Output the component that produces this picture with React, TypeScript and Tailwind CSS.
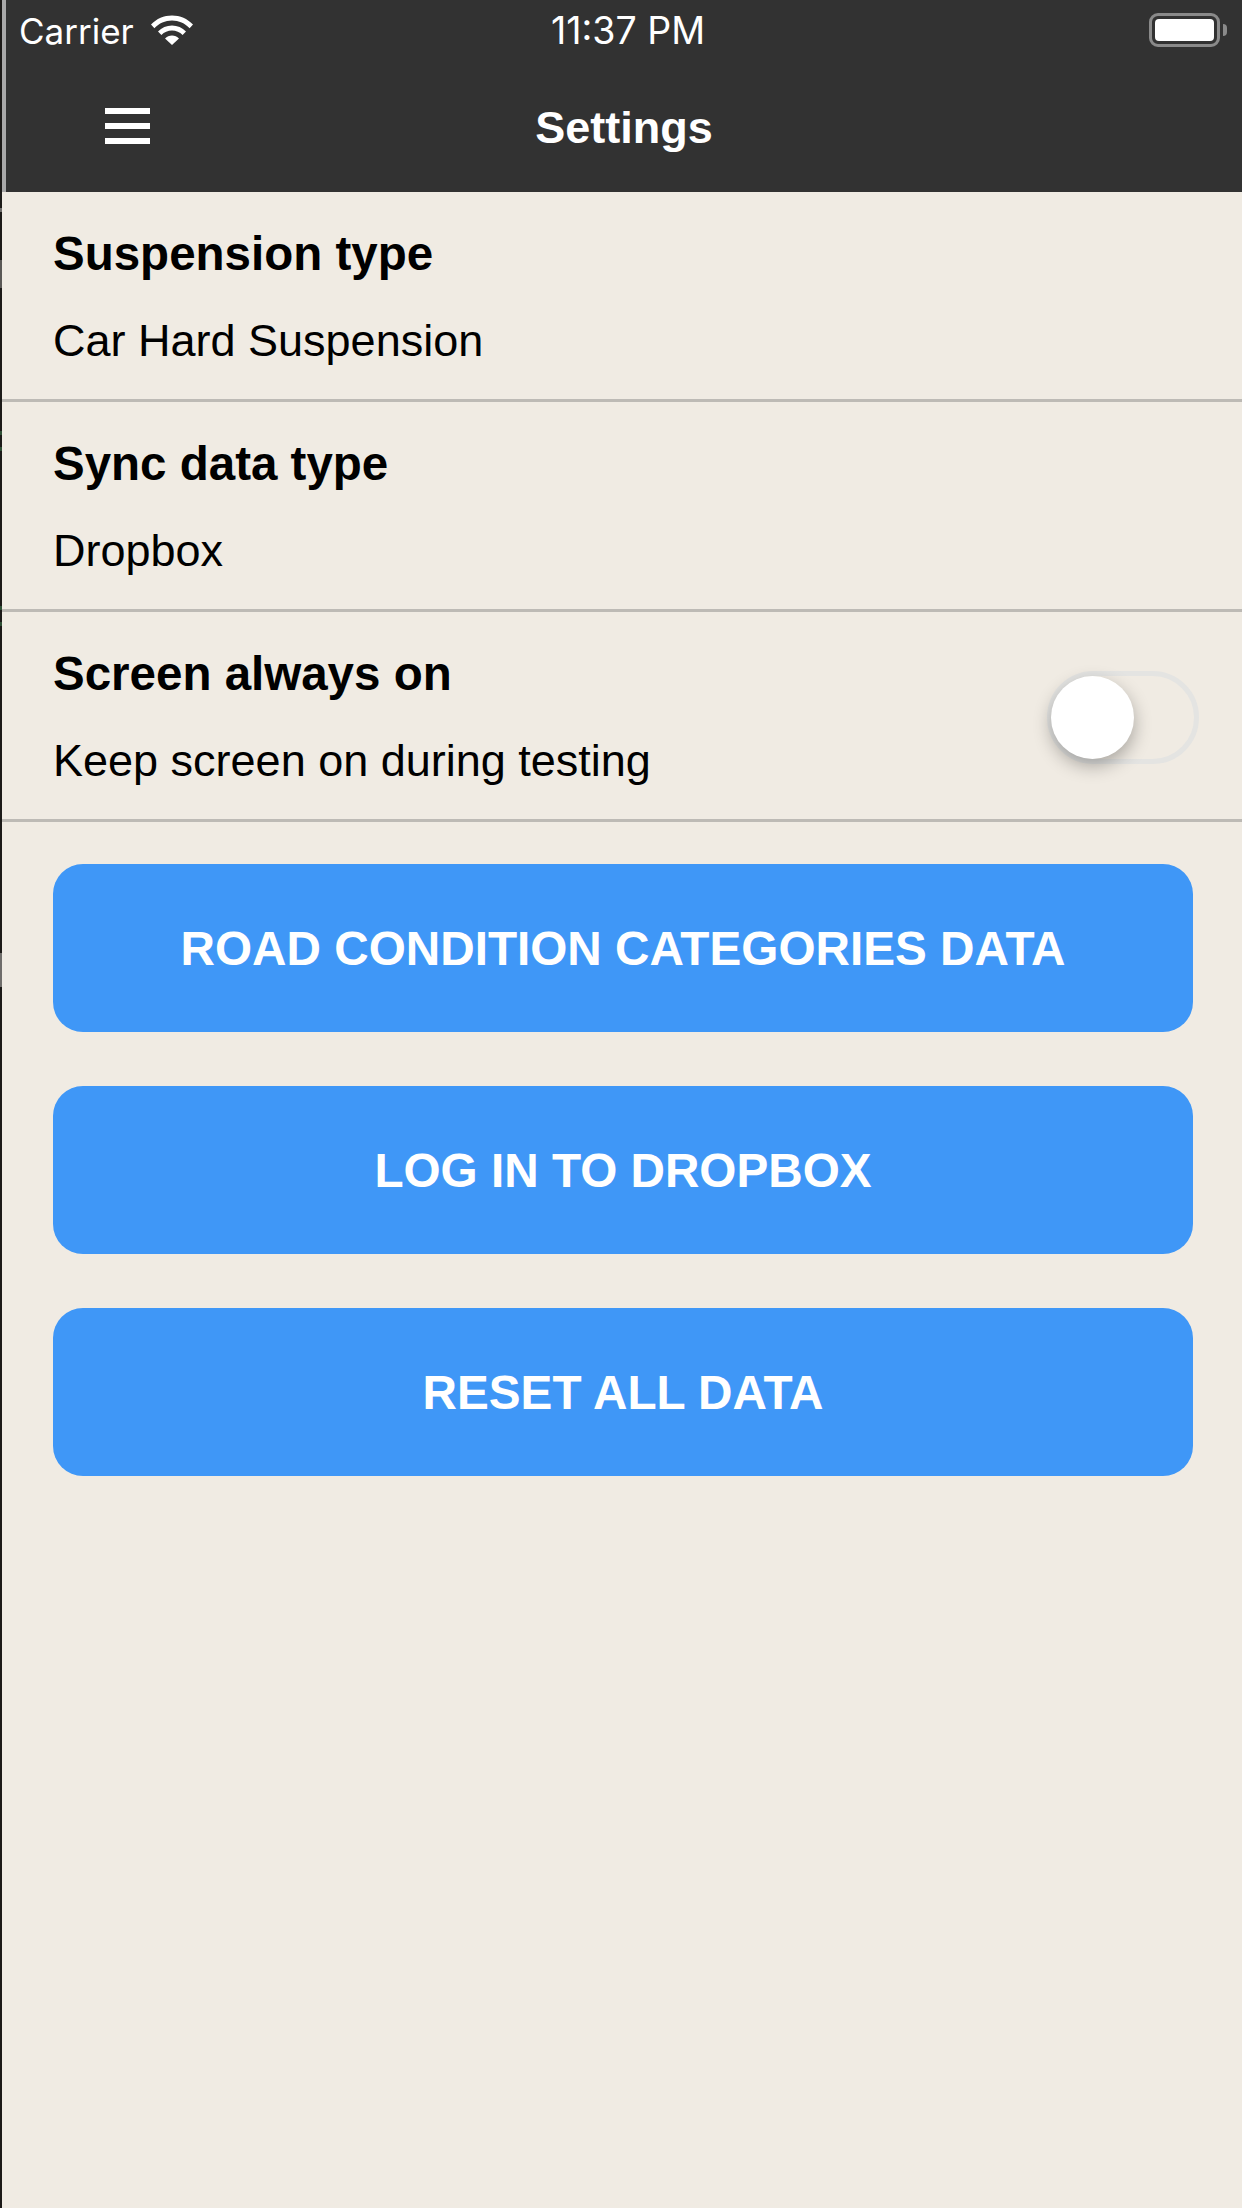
const rows = [
  { title: "Suspension type", value: "Car Hard Suspension" },
  { title: "Sync data type", value: "Dropbox" },
  { title: "Screen always on", value: "Keep screen on during testing", toggle: true },
]

const buttons = ["ROAD CONDITION CATEGORIES DATA", "LOG IN TO DROPBOX", "RESET ALL DATA"]

function Wifi() {
  return (
    <svg width="42" height="30" viewBox="0 0 42 30" fill="#fff">
      <path d="M0 9.600C5.600 3.800 12.900.6 21 .6s15.400 3.200 21 9L38.600 13.200C33.900 8.400 27.800 5.600 21 5.600S8.100 8.400 3.400 13.200Z" />
      <path d="M7 16.500C10.700 12.800 15.600 10.500 21 10.500s10.300 2.300 14 6L31.600 20C28.800 17.300 25.100 15.600 21 15.600S13.200 17.300 10.400 20Z" />
      <path d="M14 23.500C15.900 21.700 18.300 20.600 21 20.600s5.100 1.100 7 2.900L21 30Z" />
    </svg>
  )
}

function Battery() {
  return (
    <div className="flex items-center gap-[3px]">
      <div className="w-[71px] h-[34px] rounded-[9px] border-[3px] border-[#8a8a8a] p-[3px]">
        <div className="w-full h-full rounded-[4px] bg-white"></div>
      </div>
      <div className="w-[4px] h-[12px] rounded-r-full bg-[#8a8a8a]"></div>
    </div>
  )
}

export default function App() {
  return (
    <div className="relative w-[1242px] h-[2208px] bg-[#f0ebe3] border-l-2 border-[#1c1a18]" style={{ fontFamily: "'Liberation Sans', Arial, sans-serif" }}>
      {/* Marks left on the window edge */}
      <div className="absolute left-[-2px] top-[208px] w-[2px] h-[4px] bg-[#6f6d6b]"></div>
      <div className="absolute left-[-2px] top-[260px] w-[2px] h-[28px] bg-[#5a5856]"></div>
      <div className="absolute left-[-2px] top-[431px] w-[2px] h-[4px] bg-[#2f4f35]"></div>
      <div className="absolute left-[-2px] top-[447px] w-[2px] h-[4px] bg-[#2f4f35]"></div>
      <div className="absolute left-[-2px] top-[606px] w-[2px] h-[4px] bg-[#2f4f35]"></div>
      <div className="absolute left-[-2px] top-[622px] w-[2px] h-[4px] bg-[#2f4f35]"></div>
      <div className="absolute left-[-2px] top-[953px] w-[2px] h-[34px] bg-[#6f6d6b]"></div>

      {/* Header */}
      <div className="h-[192px] bg-[#323232] text-white border-l-[4px] border-[#a8a8a8] flex flex-col">
        <div className="h-[60px] flex items-center justify-between pl-[13px] pr-[15px] relative font-['Inter',sans-serif]">
          <div className="flex items-center gap-[17px]">
            <span className="text-[35px] leading-none pt-[2px]">Carrier</span>
            <Wifi />
          </div>
          <span className="absolute left-[8px] right-0 text-center text-[37.5px] leading-none pt-[2px]">11:37 PM</span>
          <Battery />
        </div>
        <div className="flex-1 relative flex items-center justify-center pt-[4px]">
          <div className="absolute left-[99px] top-[48px] w-[45px] flex flex-col gap-[9px]">
            <div className="h-[6px] bg-white"></div>
            <div className="h-[6px] bg-white"></div>
            <div className="h-[6px] bg-white"></div>
          </div>
          <span className="text-[45px] font-bold">Settings</span>
        </div>
      </div>

      {/* Rows */}
      {rows.map((row) => (
        <div key={row.title} className="h-[210px] border-b-[3px] border-[#bdbab5] flex items-center justify-between pl-[51px] pr-[43px]">
          <div className="flex flex-col gap-[38px] text-black pt-[3px]">
            <span className="text-[47.5px] leading-[50px] font-bold">{row.title}</span>
            <span className="text-[45px] leading-[48px]">{row.value}</span>
          </div>
          {row.toggle && (
            <div className="relative mt-[4px] w-[152px] h-[93px] rounded-full border-[5px] border-[#e4e4e2]">
              <div className="absolute left-[-1px] top-0 w-[83px] h-[83px] rounded-full bg-white shadow-[0_7px_18px_rgba(0,0,0,0.3)]"></div>
            </div>
          )}
        </div>
      ))}

      {/* Buttons */}
      <div className="flex flex-col gap-[54px] pt-[42px] pl-[51px] pr-[49px]">
        {buttons.map((label) => (
          <div key={label} className="h-[168px] pt-[2px] rounded-[30px] bg-[#3f97f7] text-white flex items-center justify-center text-[47.7px] font-bold">
            {label}
          </div>
        ))}
      </div>
    </div>
  )
}
